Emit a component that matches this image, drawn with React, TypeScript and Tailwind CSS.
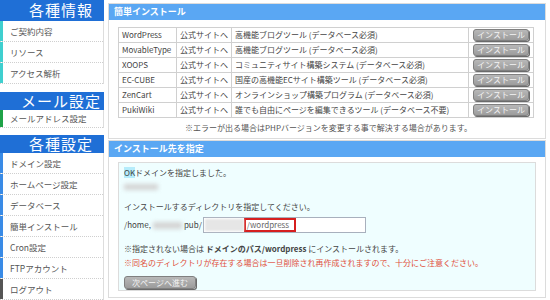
import React from "react";

const F = { fontFamily: '"Noto Sans CJK JP", "Noto Sans", sans-serif' };

function SideHeader({ children, h }: { children: React.ReactNode; h: number }) {
  return (
    <div
      className="bg-[#1f6fd6] text-white text-[15px] pl-[18px] flex items-center justify-center whitespace-nowrap tracking-[1px]"
      style={{ height: h }}
    >
      {children}
    </div>
  );
}

function SideItem({ children, color, h = 21 }: { children: React.ReactNode; color: string; h?: number }) {
  return (
    <div className="flex border-b border-dotted border-[#cfcfcf] bg-white" style={{ height: h }}>
      <div className="w-[3px] shrink-0" style={{ background: color }} />
      <div className="pl-[7px] text-[8.5px] text-[#555] flex items-center whitespace-nowrap">{children}</div>
    </div>
  );
}

const rows = [
  ["WordPress", "高機能ブログツール (データベース必須)"],
  ["MovableType", "高機能ブログツール (データベース必須)"],
  ["XOOPS", "コミュニティサイト構築システム (データベース必須)"],
  ["EC-CUBE", "国産の高機能ECサイト構築ツール (データベース必須)"],
  ["ZenCart", "オンラインショップ構築プログラム (データベース必須)"],
  ["PukiWiki", "誰でも自由にページを編集できるツール (データベース不要)"],
];

function GrayButton({ w, h, children }: { w: number; h: number; children: React.ReactNode }) {
  return (
    <div
      className="rounded-[3px] bg-gradient-to-b from-[#b8b8b8] to-[#9c9c9c] border border-[#808080] text-[#f4f4f4] text-[8px] text-center flex items-center justify-center whitespace-nowrap shadow-[1px_1px_0_#6a6a6a]"
      style={{ width: w, height: h }}
    >
      {children}
    </div>
  );
}

export default function App() {
  return (
    <div className="w-[550px] h-[300px] bg-white flex overflow-hidden text-[#333]" style={F}>
      {/* Sidebar */}
      <div className="w-[104px] shrink-0 flex flex-col">
        <SideHeader h={21}>各種情報</SideHeader>
        <div className="border-r border-[#ddd]">
          <SideItem color="#3fcfcf">ご契約内容</SideItem>
          <SideItem color="#3fcfcf">リソース</SideItem>
          <SideItem color="#3fcfcf">アクセス解析</SideItem>
        </div>
        <div className="h-[8px]" />
        <SideHeader h={18}>メール設定</SideHeader>
        <div className="border-r border-[#ddd]">
          <SideItem color="#1fa247" h={18}>メールアドレス設定</SideItem>
        </div>
        <div className="h-[7px]" />
        <SideHeader h={18}>各種設定</SideHeader>
        <div className="border-r border-[#ddd]">
          <SideItem color="#3a8be6">ドメイン設定</SideItem>
          <SideItem color="#3a8be6">ホームページ設定</SideItem>
          <SideItem color="#3a8be6">データベース</SideItem>
          <SideItem color="#3a8be6">簡単インストール</SideItem>
          <SideItem color="#3a8be6">Cron設定</SideItem>
          <SideItem color="#3a8be6">FTPアカウント</SideItem>
          <SideItem color="#555555">ログアウト</SideItem>
        </div>
      </div>

      {/* Main */}
      <div className="w-[438px] ml-[4px] pt-[3px] flex flex-col">
        {/* Panel 1 */}
        <div className="border border-[#dcdcdc] bg-white h-[136px]">
          <div className="h-[16px] bg-[#5aa7f3] text-white text-[9px] font-bold leading-[16px] pl-[5px] whitespace-nowrap">簡単インストール</div>
          <div className="pl-[9px] pt-[7px]">
            <table className="border-collapse text-[8px] text-[#444]">
              <tbody>
                {rows.map(([n, d]) => (
                  <tr key={n} className="h-[15px]">
                    <td className="border border-[#d0d0d0] w-[58px] pl-[3px] leading-[14px] whitespace-nowrap">{n}</td>
                    <td className="border border-[#d0d0d0] w-[55px] pl-[3px] leading-[14px] whitespace-nowrap">公式サイトへ</td>
                    <td className="border border-[#d0d0d0] w-[237px] pl-[3px] leading-[14px] whitespace-nowrap">{d}</td>
                    <td className="border border-[#d0d0d0] w-[65px] pl-[4px] leading-[14px]">
                      <GrayButton w={56} h={12}>インストール</GrayButton>
                    </td>
                  </tr>
                ))}
              </tbody>
            </table>
            <div className="text-[8px] text-[#555] leading-[12px] mt-[4px] pl-[67px] whitespace-nowrap">※エラーが出る場合はPHPバージョンを変更する事で解決する場合があります。</div>
          </div>
        </div>

        {/* Panel 2 */}
        <div className="border border-[#dcdcdc] bg-white mt-[1px] h-[158px]">
          <div className="h-[16px] bg-[#5aa7f3] text-white text-[9px] font-bold leading-[16px] pl-[5px] whitespace-nowrap">インストール先を指定</div>
          <div className="mx-[9px] mt-[5px] h-[129px] border border-[#dcdcdc] bg-[#effeff] pl-[5px] pt-[3px] text-[8px] text-[#444]">
            <div className="h-[14px] leading-[14px] whitespace-nowrap"><span className="bg-[#b5ecfb]">OK</span>ドメインを指定しました。</div>
            <div className="h-[14px] flex items-center"><div className="w-[34px] h-[6px] bg-[#d4d4d4] blur-[2px]" /></div>
            <div className="h-[6px]" />
            <div className="h-[14px] leading-[14px] whitespace-nowrap">インストールするディレクトリを指定してください。</div>
            <div className="h-[3px]" />
            <div className="flex items-center h-[16px] whitespace-nowrap">
              <span>/home,</span>
              <div className="w-[29px] h-[7px] bg-[#d4d4d4] blur-[2px] mx-[2px]" />
              <span>pub/</span>
              <div className="ml-[1px] w-[163px] h-[16px] border border-[#a8b0bd] bg-white flex items-center pl-[1px]">
                <div className="w-[39px] h-[12px] bg-[#e6e6e6] blur-[1px]" />
                <div className="h-[14px] border-2 border-[#d61f1f] pl-[1px] text-[8px] leading-[10px] text-[#666] w-[52px]">/wordpress</div>
              </div>
            </div>
            <div className="h-[9px]" />
            <div className="h-[14px] leading-[14px] whitespace-nowrap">※指定されない場合は <b>ドメインのパス/wordpress</b> にインストールされます。</div>
            <div className="h-[14px] leading-[14px] text-[#e0503c] whitespace-nowrap">※同名のディレクトリが存在する場合は一旦削除され再作成されますので、十分にご注意ください。</div>
            <div className="h-[6px]" />
            <GrayButton w={72} h={13}>次ページへ進む</GrayButton>
          </div>
        </div>
      </div>
    </div>
  );
}
